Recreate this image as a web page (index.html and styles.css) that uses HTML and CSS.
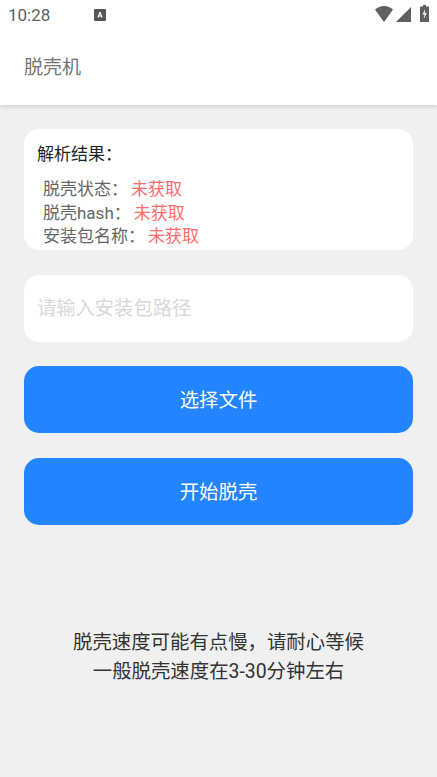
FILE: index.html
```html
<!DOCTYPE html>
<html lang="zh-CN">
<head>
    <meta charset="UTF-8">
    <meta name="viewport" content="width=device-width, initial-scale=1.0">
    <title>脱壳机</title>
    <link rel="stylesheet" href="styles.css">
</head>
<body>
    <header class="app-header">
        <div class="status-bar">
            <span class="clock">10:28</span>
            <svg class="status-a" width="12" height="12" viewBox="0 0 12 12">
                <rect width="12" height="12" rx="1" fill="#555"/>
                <path d="M3.400 8.600 5.400 3h1.200l2 5.600H7.300l-.4-1.200H5.100l-.4 1.200zM5.400 6.400h1.200L6 4.600z" fill="#fff"/>
            </svg>
            <div class="status-icons">
                <svg class="icon-wifi" width="18" height="16" viewBox="0 0 18 16">
                    <path d="M0 3.500C2.500 1.300 5.500 0 9 0s6.500 1.300 9 3.500L9 16z" fill="#5f5f5f"/>
                </svg>
                <svg class="icon-signal" width="15" height="15" viewBox="0 0 15 15">
                    <path d="M0 15 15 0v15z" fill="#5f5f5f"/>
                </svg>
                <svg class="icon-battery" width="9" height="17" viewBox="0 0 9 17">
                    <path d="M3 0h3v1.500h3V17H0V1.500h3z" fill="#5f5f5f"/>
                    <path d="M5.200 4 2.500 9.500h2L3.800 14l2.900-6h-2z" fill="#fff"/>
                </svg>
            </div>
        </div>
        <div class="title-bar">脱壳机</div>
    </header>

    <main class="content">
        <section class="card result-card">
            <h2 class="result-title">解析结果：</h2>
            <ul class="result-list">
                <li>脱壳状态：<span class="not-found">未获取</span></li>
                <li>脱壳hash：<span class="not-found">未获取</span></li>
                <li>安装包名称：<span class="not-found">未获取</span></li>
            </ul>
        </section>

        <input class="card path-input" type="text" placeholder="请输入安装包路径">

        <button class="button">选择文件</button>
        <button class="button">开始脱壳</button>

        <p class="note">脱壳速度可能有点慢，请耐心等候<br>一般脱壳速度在3-30分钟左右</p>
    </main>
</body>
</html>
```

FILE: styles.css
```css
* {
    box-sizing: border-box;
}

html, body {
    height: 100%;
}

body {
    margin: 0;
    background-color: #f0f0f0;
    color: #333;
    font-family: Roboto, "Noto Sans CJK SC", sans-serif;
    overflow: hidden;
}

.app-header {
    height: 105px;
    background-color: white;
    box-shadow: 0 1px 5px rgba(0, 0, 0, 0.18);
}

.status-bar {
    display: flex;
    align-items: center;
    height: 29px;
    padding: 0 8px 0 8px;
}

.clock {
    font-size: 17px;
    color: #5f5f5f;
}

.status-a {
    margin-left: 44px;
}

.status-icons {
    display: flex;
    align-items: flex-end;
    height: 17px;
    margin-left: auto;
    margin-bottom: 2px;
}

.icon-signal {
    margin-left: 3px;
}

.icon-battery {
    margin-left: 9px;
}

.title-bar {
    padding: 26px 0 0 24px;
    font-size: 19px;
    line-height: 26px;
    color: #757575;
}

.content {
    display: flex;
    flex-direction: column;
    padding: 24px 24px 0;
}

.card {
    background-color: white;
    border-radius: 15px;
}

.result-card {
    height: 121px;
    padding: 14px 13px 0;
    overflow: hidden;
}

.result-title {
    margin: 0;
    font-size: 17px;
    font-weight: normal;
    line-height: 22px;
    color: #222;
}

.result-list {
    margin: 13px 0 0;
    padding: 0 0 0 6px;
    list-style: none;
    font-size: 17px;
    line-height: 23.5px;
    color: #666;
}

.not-found {
    margin-left: 3px;
    color: #ff6b6b;
}

.path-input {
    height: 67px;
    margin-top: 24.5px;
    padding: 0 13px;
    border: none;
    font-family: inherit;
    font-size: 19.300px;
    outline: none;
}

.path-input::placeholder {
    color: #d8d8d8;
}

.button {
    height: 67px;
    margin-top: 24.5px;
    padding-bottom: 3px;
    border: none;
    border-radius: 15px;
    background-color: #2285ff;
    color: white;
    font-family: inherit;
    font-size: 19.400px;
}

.note {
    margin: 103.500px 0 0;
    text-align: center;
    font-size: 19.400px;
    line-height: 29px;
    color: #333;
}
```
